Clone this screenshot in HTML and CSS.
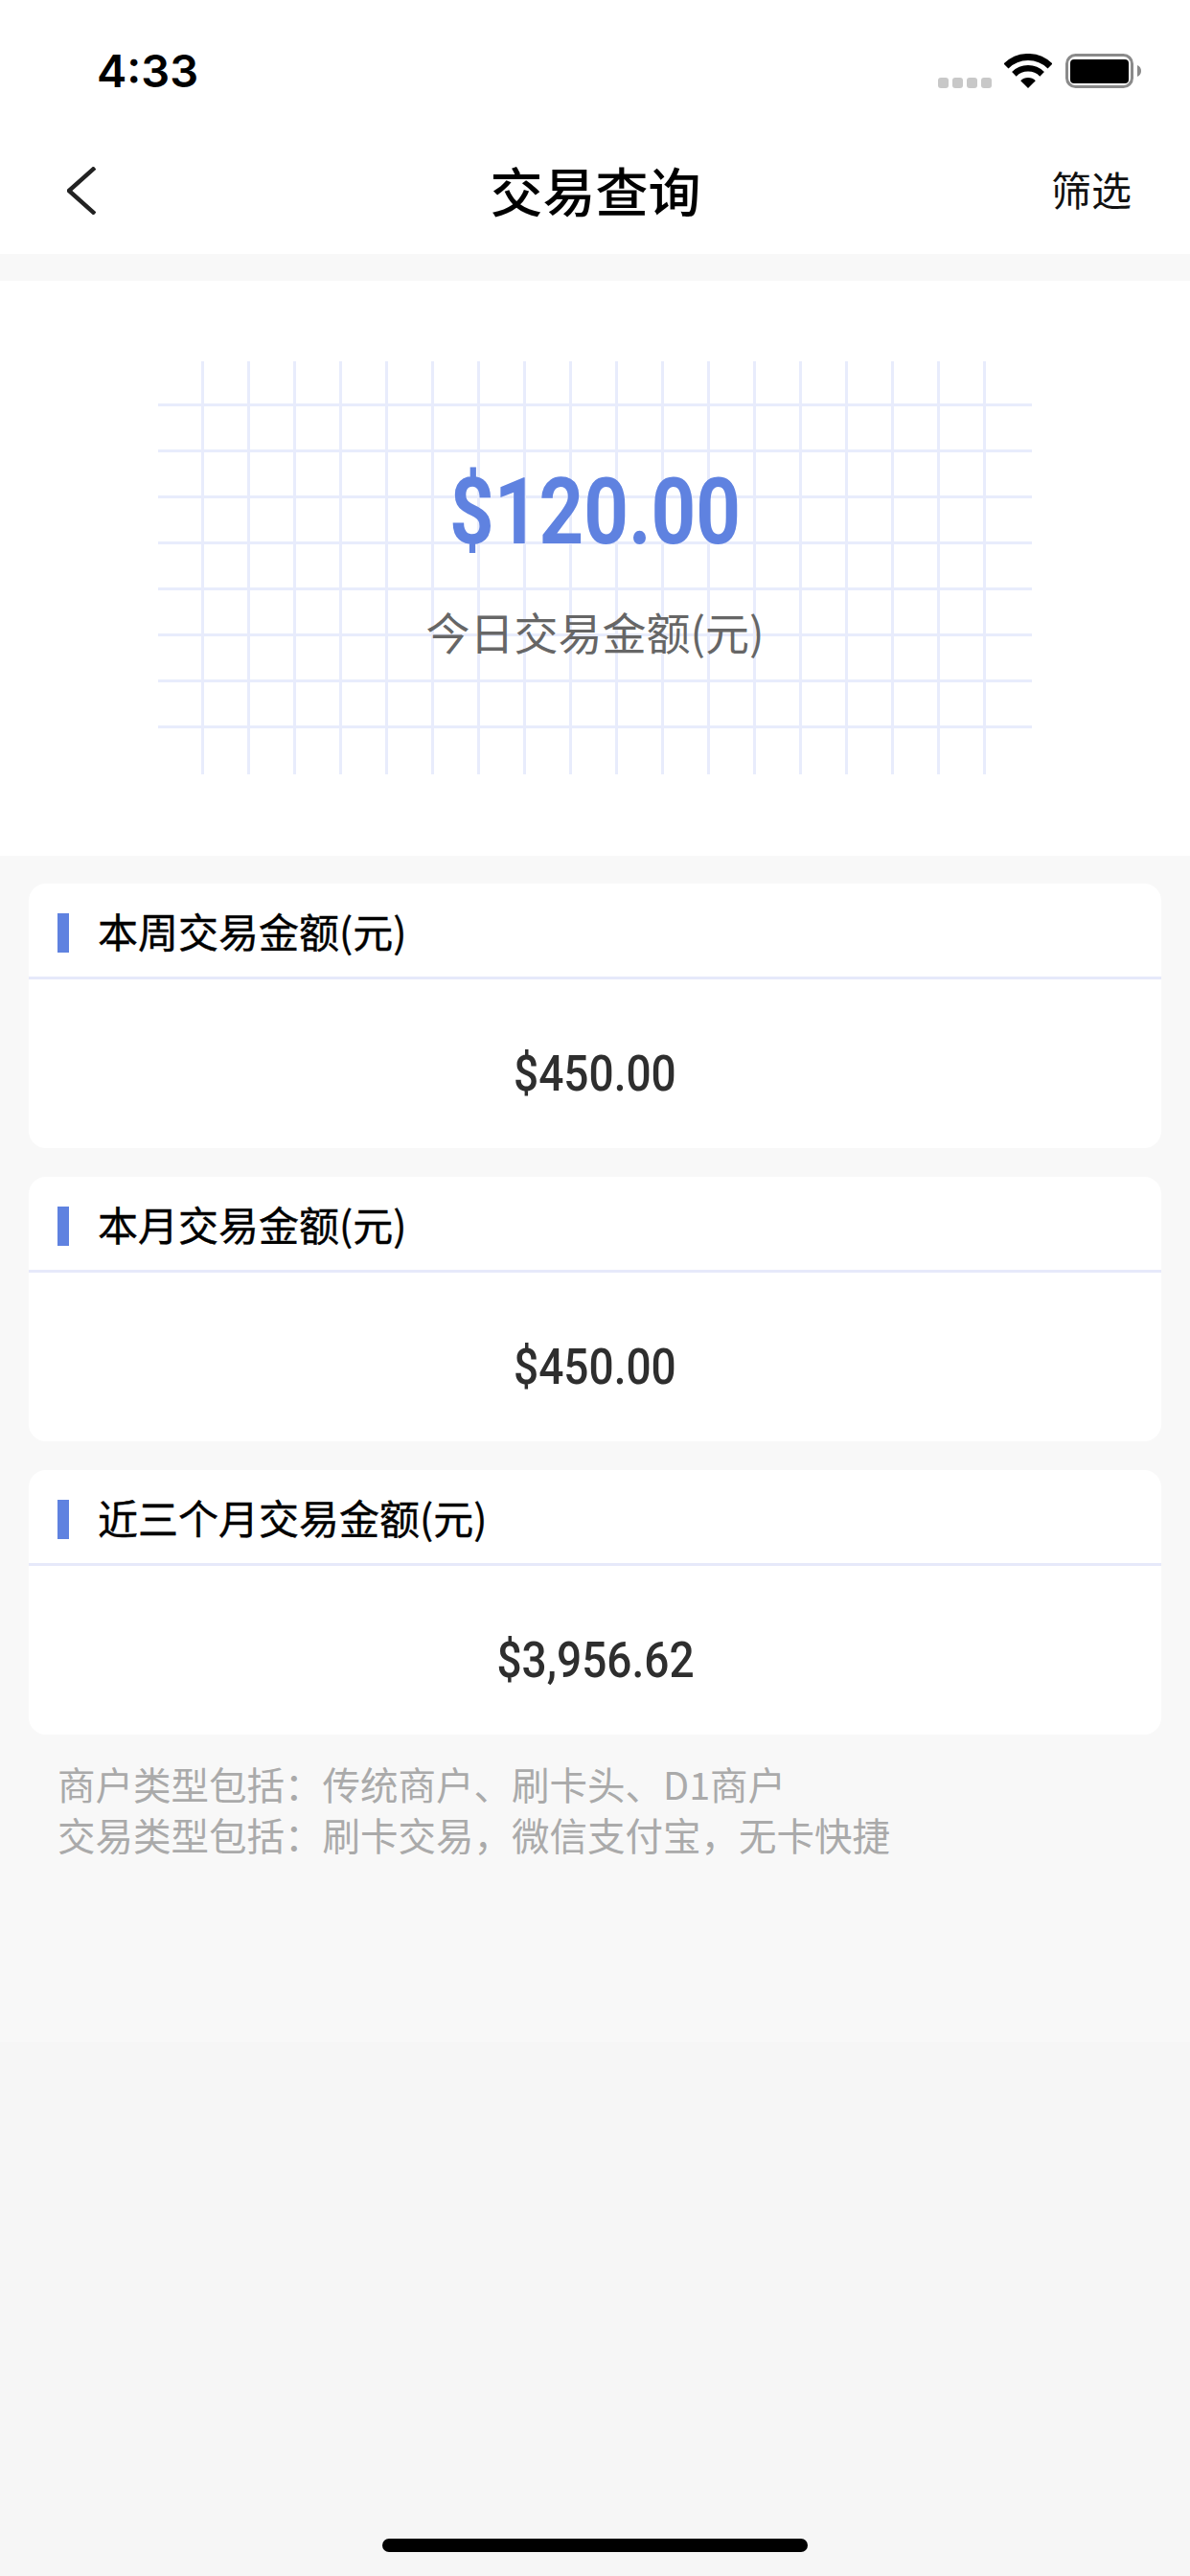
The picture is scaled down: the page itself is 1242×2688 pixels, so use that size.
FILE: index.html
```html
<!DOCTYPE html>
<html>
<head>
  <meta charset="utf-8">
  <link rel="stylesheet" href="styles.css">
</head>
<body>
  <div class="status-bar">
    <span class="time">4:33</span>
    <div class="status-icons">
      <div class="signal"><i></i><i></i><i></i><i></i></div>
      <svg class="wifi" width="50" height="36" viewBox="0 0 50 36">
        <path d="M2 13A32.5 32.5 0 0 1 48 13" fill="none" stroke="#000" stroke-width="7"/>
        <path d="M10.4 21.4A20.7 20.7 0 0 1 39.6 21.4" fill="none" stroke="#000" stroke-width="6.5"/>
        <path d="M25 36L17.2 28.2A11 11 0 0 1 32.8 28.2Z" fill="#000"/>
      </svg>
      <svg class="battery" width="79" height="36" viewBox="0 0 79 36">
        <rect x="1.5" y="1.5" width="68" height="33" rx="9" fill="none" stroke="#8a8a8a" stroke-width="3"/>
        <rect x="5" y="6" width="61" height="25" rx="4" fill="#000"/>
        <path d="M75 12C77.500 13 79 15 79 18C79 21 77.500 23 75 24Z" fill="#8a8a8a"/>
      </svg>
    </div>
  </div>

  <div class="nav-bar">
    <svg class="back" width="30" height="50" viewBox="0 0 30 50">
      <path d="M29 1L2 25L29 49" fill="none" stroke="#222" stroke-width="4.500"/>
    </svg>
    <h1>交易查询</h1>
    <a class="filter">筛选</a>
  </div>

  <div class="hero">
    <div class="grid">
      <div class="hero-amount">$120.00</div>
      <div class="hero-label">今日交易金额(元)</div>
    </div>
  </div>

  <div class="cards">
    <div class="card">
      <div class="card-title"><span>本周交易金额(元)</span></div>
      <div class="card-value"><span>$450.00</span></div>
    </div>
    <div class="card">
      <div class="card-title"><span>本月交易金额(元)</span></div>
      <div class="card-value"><span>$450.00</span></div>
    </div>
    <div class="card">
      <div class="card-title"><span>近三个月交易金额(元)</span></div>
      <div class="card-value"><span>$3,956.62</span></div>
    </div>
  </div>

  <div class="notes">
    <p>商户类型包括&#xFF1A;传统商户、刷卡头、D1商户</p>
    <p>交易类型包括&#xFF1A;刷卡交易&#xFF0C;微信支付宝&#xFF0C;无卡快捷</p>
  </div>

  <div class="home-bar"></div>
</body>
</html>
```

FILE: styles.css
```css
* {
  box-sizing: border-box;
}
body {
  margin: 0;
  width: 1242px;
  height: 2688px;
  display: flex;
  flex-direction: column;
  background: linear-gradient(#f8f8f8 2131px, #f6f6f6 2131px);
  font-family: "Noto Sans CJK SC", "Noto Sans", sans-serif;
  color: #000;
}

/* Status bar */
.status-bar {
  height: 132px;
  background: #fff;
  display: flex;
  justify-content: space-between;
  padding: 56px 51px 0 101px;
}
.time {
  font-family: Inter, sans-serif;
  font-size: 47px;
  font-weight: 600;
  line-height: 36px;
}
.status-icons {
  display: flex;
  align-items: flex-start;
}
.signal {
  display: flex;
  gap: 4px;
  margin: 25px 13px 0 0;
}
.signal i {
  width: 11px;
  height: 11px;
  border-radius: 3px;
  background: #c8c8c8;
}
.wifi {
  margin-right: 14px;
}

/* Nav bar */
.nav-bar {
  height: 133px;
  background: #fff;
  display: grid;
  grid-template-columns: 1fr auto 1fr;
  align-items: center;
  padding: 0 61px 4px 62px;
}
.back {
  display: block;
  margin: 4px 0 0 8px;
}
.nav-bar h1 {
  margin: 0;
  font-size: 55px;
  font-weight: 500;
  line-height: 80px;
}
.filter {
  justify-self: end;
  font-size: 42px;
  line-height: 60px;
  color: #111;
}

/* Today's amount */
.hero {
  margin-top: 28px;
  background: #fff;
  padding: 84px 0 85px;
}
.grid {
  width: 912px;
  height: 431px;
  margin: 0 auto;
  padding-bottom: 4px;
  display: flex;
  flex-direction: column;
  text-align: center;
  background-image:
    linear-gradient(#e8ecfc 3px, transparent 3px),
    linear-gradient(#fff, #fff),
    linear-gradient(90deg, #e8ecfc 3px, transparent 3px);
  background-size: 48px 48px, 48px 100%, 48px 48px;
  background-position: 0 44px, right top, 45px 0;
  background-repeat: repeat, no-repeat, repeat;
  background-clip: content-box, border-box, border-box;
}
.hero-amount {
  margin-top: 100px;
  font-family: Roboto, sans-serif;
  font-size: 97px;
  font-weight: 700;
  line-height: 114px;
  color: #5f82e0;
  transform: scaleX(0.84);
}
.hero-label {
  margin-top: 34px;
  font-size: 46px;
  line-height: 66px;
  color: #666;
}

/* Cards */
.cards {
  display: flex;
  flex-direction: column;
  gap: 30px;
  padding: 29px 30px 0;
}
.card {
  height: 276px;
  background: #fff;
  border-radius: 18px;
}
.card-title {
  height: 100px;
  display: flex;
  align-items: center;
  padding-top: 6px;
  border-bottom: 3px solid #e6e9fa;
  font-size: 42px;
  -webkit-text-stroke: 0.4px #000;
}
.card-title::before {
  content: "";
  width: 12px;
  height: 41px;
  margin: 0 30px 0 30px;
  background: #5f82e0;
}
.card-title span {
  margin-bottom: 6px;
}
.card-value {
  height: 176px;
  padding-top: 20px;
  display: flex;
  align-items: center;
  justify-content: center;
}
.card-value span {
  font-family: Roboto, sans-serif;
  font-size: 52px;
  font-weight: 500;
  color: #2e2e2e;
  transform: scaleX(0.885);
}

/* Notes */
.notes {
  padding: 24px 60px 0;
  font-size: 39.5px;
  line-height: 53px;
  color: #aaa;
}
.notes p {
  margin: 0;
}

.home-bar {
  width: 444px;
  height: 14px;
  margin: auto auto 25px;
  border-radius: 7px;
  background: #000;
}
```
